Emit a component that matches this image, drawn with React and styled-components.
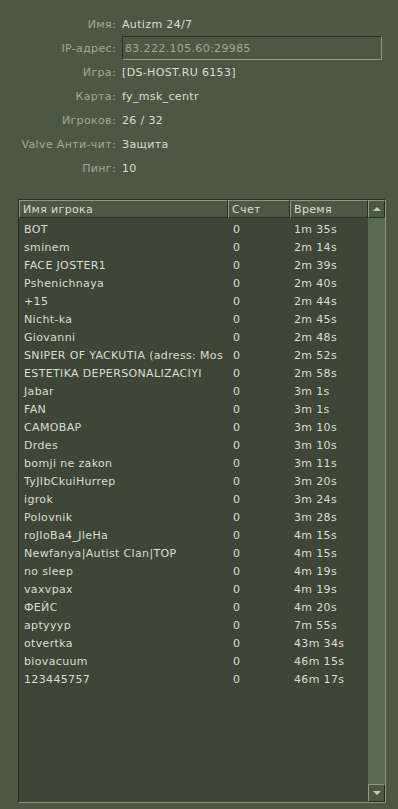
import styled, { createGlobalStyle } from "styled-components";

const GlobalStyle = createGlobalStyle`
  html, body {
    margin: 0;
    padding: 0;
    background: #4c5844;
  }
  body {
    font-family: "DejaVu Sans", "Liberation Sans", sans-serif;
    font-size: 11px;
    letter-spacing: 0.35px;
    color: #d8ded3;
  }
`;

const Dialog = styled.div`
  width: 398px;
  height: 809px;
  box-sizing: border-box;
  padding-top: 12px;
  display: flex;
  flex-direction: column;
  overflow: hidden;
`;

const InfoGrid = styled.div`
  display: grid;
  grid-template-columns: 116px 260px;
  grid-auto-rows: 24px;
  column-gap: 6px;
  align-items: center;
`;

const Label = styled.div`
  text-align: right;
  color: #a0aa95;
  white-space: nowrap;
`;

const Value = styled.div`
  color: #d8ded3;
  white-space: nowrap;
`;

const Field = styled.div`
  height: 24px;
  box-sizing: border-box;
  border: 1px solid;
  border-color: #282e22 #8c9880 #8c9880 #282e22;
  padding-left: 2px;
  display: flex;
  align-items: center;
  color: #a0aa95;
`;

const ListPanel = styled.div`
  margin: 19px 12px 0 18px;
  width: 368px;
  height: 604px;
  box-sizing: border-box;
  border: 1px solid;
  border-color: #282e22 #8c9880 #8c9880 #282e22;
  background: #3e4637;
  display: flex;
  flex-direction: column;
`;

const HeaderRow = styled.div`
  display: grid;
  grid-template-columns: 209px 62px 78px 17px;
  height: 18px;
  background: #4c5844;
`;

const HeaderCell = styled.div`
  box-sizing: border-box;
  border: 1px solid;
  border-color: #8c9880 #282e22 #282e22 #8c9880;
  padding-left: 3px;
  display: flex;
  align-items: center;
  color: #d8ded3;
  white-space: nowrap;
  overflow: hidden;
`;

const ScrollButton = styled.div`
  box-sizing: border-box;
  width: 17px;
  height: 18px;
  border: 1px solid;
  border-color: #8c9880 #282e22 #282e22 #8c9880;
  background: #4c5844;
  display: flex;
  align-items: center;
  justify-content: center;
`;

const Arrow = styled.span`
  width: 0;
  height: 0;
  border-left: 4px solid transparent;
  border-right: 4px solid transparent;
  ${(p) =>
    p.$down
      ? "border-top: 4px solid #c4cbbb;"
      : "border-bottom: 4px solid #c4cbbb;"}
`;

const Body = styled.div`
  flex: 1;
  display: flex;
  min-height: 0;
`;

const Rows = styled.div`
  width: 349px;
  padding-top: 2px;
  overflow: hidden;
`;

const Row = styled.div`
  display: grid;
  grid-template-columns: 209px 62px 78px;
  height: 18px;
  align-items: center;
`;

const Cell = styled.div`
  padding-left: ${(p) => p.$pad || 5}px;
  color: #d8ded3;
  white-space: nowrap;
  overflow: hidden;
`;

const Track = styled.div`
  width: 17px;
  background: #5a6a50;
  display: flex;
  flex-direction: column;
  justify-content: flex-end;
`;

const info = [
  ["Имя:", "Autizm 24/7"],
  ["IP-адрес:", "83.222.105.60:29985", true],
  ["Игра:", "[DS-HOST.RU 6153]"],
  ["Карта:", "fy_msk_centr"],
  ["Игроков:", "26 / 32"],
  ["Valve Анти-чит:", "Защита"],
  ["Пинг:", "10"],
];

const players = [
  ["BOT", "1m 35s"],
  ["sminem", "2m 14s"],
  ["FACE JOSTER1", "2m 39s"],
  ["Pshenichnaya", "2m 40s"],
  ["+15", "2m 44s"],
  ["Nicht-ka", "2m 45s"],
  ["Giovanni", "2m 48s"],
  ["SNIPER OF YACKUTIA (adress: Mos", "2m 52s"],
  ["ESTETIKA DEPERSONALIZACIYI", "2m 58s"],
  ["Jabar", "3m 1s"],
  ["FAN", "3m 1s"],
  ["CAMOBAP", "3m 10s"],
  ["Drdes", "3m 10s"],
  ["bomji ne zakon", "3m 11s"],
  ["TyJIbCkuiHurrep", "3m 20s"],
  ["igrok", "3m 24s"],
  ["Polovnik", "3m 28s"],
  ["roJIoBa4_JIeHa", "4m 15s"],
  ["Newfanya|Autist Clan|TOP", "4m 15s"],
  ["no sleep", "4m 19s"],
  ["vaxvpax", "4m 19s"],
  ["ФЕЙС", "4m 20s"],
  ["aptyyyp", "7m 55s"],
  ["otvertka", "43m 34s"],
  ["biovacuum", "46m 15s"],
  ["123445757", "46m 17s"],
];

export default function App() {
  return (
    <>
      <GlobalStyle />
      <Dialog>
        <InfoGrid>
          {info.map(([label, value, boxed]) => [
            <Label key={label + "-l"}>{label}</Label>,
            boxed ? (
              <Field key={label + "-v"}>{value}</Field>
            ) : (
              <Value key={label + "-v"}>{value}</Value>
            ),
          ])}
        </InfoGrid>
        <ListPanel>
          <HeaderRow>
            <HeaderCell>Имя игрока</HeaderCell>
            <HeaderCell>Счет</HeaderCell>
            <HeaderCell>Время</HeaderCell>
            <ScrollButton>
              <Arrow />
            </ScrollButton>
          </HeaderRow>
          <Body>
            <Rows>
              {players.map(([name, time], i) => (
                <Row key={i}>
                  <Cell>{name}</Cell>
                  <Cell>0</Cell>
                  <Cell $pad={4}>{time}</Cell>
                </Row>
              ))}
            </Rows>
            <Track>
              <ScrollButton>
                <Arrow $down />
              </ScrollButton>
            </Track>
          </Body>
        </ListPanel>
      </Dialog>
    </>
  );
}
